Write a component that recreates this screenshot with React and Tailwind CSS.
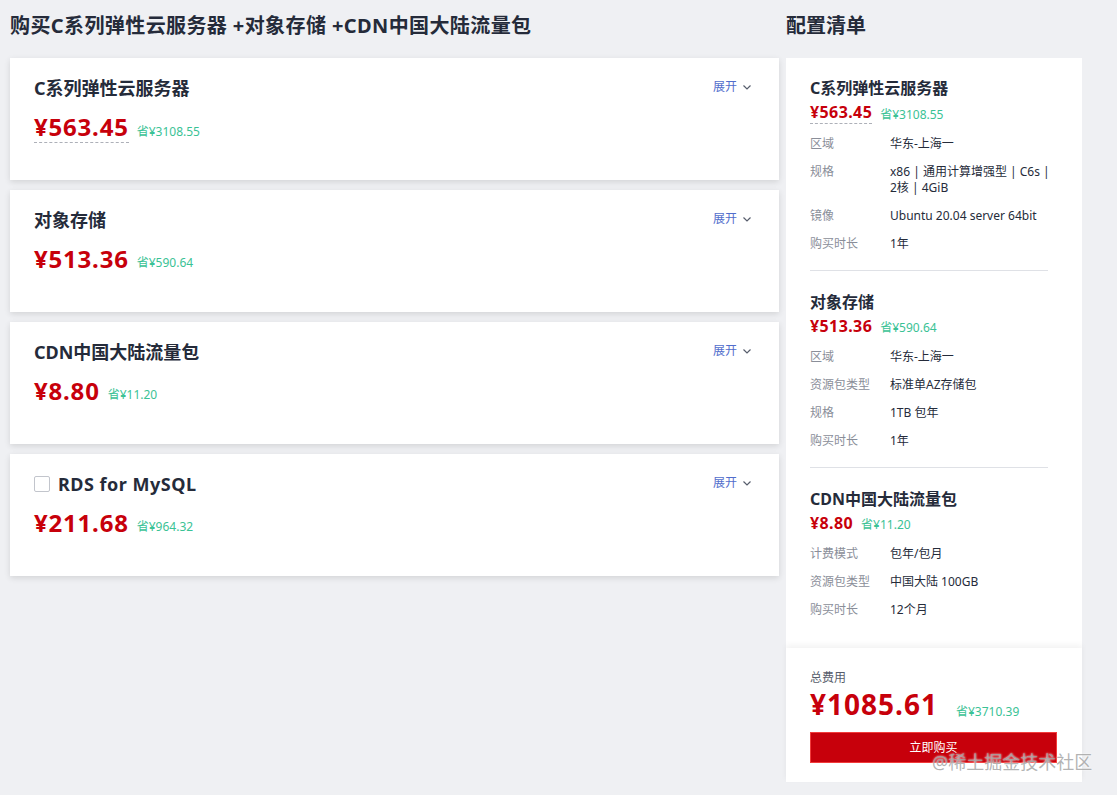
import React from "react";

const FONT = { fontFamily: '"Noto Sans", "Noto Sans CJK SC", sans-serif' };

function Chevron() {
  return (
    <svg width="10" height="10" viewBox="0 0 10 10" className="ml-[5px]">
      <path d="M1.5 3.5 L5 7 L8.5 3.5" fill="none" stroke="#575d6c" strokeWidth="1.2" />
    </svg>
  );
}

function ProductCard({ title, price, save, dashed, checkbox }) {
  return (
    <div className="h-[122px] bg-white shadow-[0_2px_6px_rgba(0,0,0,0.12)] px-6 pt-[16px] relative">
      <div className="flex items-start justify-between">
        <div className="flex items-center h-[28px]">
          {checkbox && (
            <span className="w-4 h-4 border border-[#c2c5cc] rounded-[2px] mr-2 bg-white" />
          )}
          <span className={"text-[18px] font-bold text-[#252b3a] leading-[28px] " + (checkbox ? "tracking-[0.5px]" : "")}>{title}</span>
        </div>
        <div className="flex items-center mr-[3px] mt-[1px] text-[12px] text-[#526ecc] leading-[24px]">
          展开
          <Chevron />
        </div>
      </div>
      <div className="flex items-end mt-[10px]">
        <span
          className={
            "text-[24px] font-bold text-[#c7000b] leading-[30px] tracking-[0.8px] " +
            (dashed ? "border-b border-dashed border-[#adb0b8]" : "")
          }
        >
          {price}
        </span>
        <span className="ml-[8px] mb-[3px] text-[12px] text-[#3ac295] leading-[16px]">{save}</span>
      </div>
    </div>
  );
}

function Row({ label, value }) {
  return (
    <div className="flex mt-3 text-[12px] leading-[16px]">
      <div className="w-[80px] shrink-0 text-[#8a8e99]">{label}</div>
      <div className="w-[164px] shrink-0 text-[#252b3a]">{value}</div>
    </div>
  );
}

function Section({ title, price, save, rows, dashed, divider }) {
  return (
    <div className={divider ? "pb-[18px] border-b border-[#dfe1e6]" : ""}>
      <div className="text-[16px] font-bold text-[#252b3a] leading-[24px]">{title}</div>
      <div className="flex items-end mt-[1px]">
        <span
          className={
            "text-[16px] font-bold text-[#c7000b] leading-[22px] tracking-[0.4px] " +
            (dashed ? "border-b border-dashed border-[#adb0b8]" : "")
          }
        >
          {price}
        </span>
        <span className="ml-2 text-[12px] text-[#3ac295] leading-[18px]">{save}</span>
      </div>
      {rows.map((r) => (
        <Row key={r[0]} label={r[0]} value={r[1]} />
      ))}
    </div>
  );
}

export default function App() {
  return (
    <div style={FONT} className="w-[1117px] h-[795px] bg-[#eff0f3] relative overflow-hidden">
      <div className="flex pl-[10px] pt-[12px]">
        <div className="w-[769px]">
          <h1 className="text-[20px] font-bold text-[#252b3a] leading-[28px] tracking-[0.4px]">
            购买C系列弹性云服务器 +对象存储 +CDN中国大陆流量包
          </h1>
          <div className="mt-[18px] flex flex-col gap-[10px]">
            <ProductCard title="C系列弹性云服务器" price="¥563.45" save="省¥3108.55" dashed />
            <ProductCard title="对象存储" price="¥513.36" save="省¥590.64" />
            <ProductCard title="CDN中国大陆流量包" price="¥8.80" save="省¥11.20" />
            <ProductCard title="RDS for MySQL" price="¥211.68" save="省¥964.32" checkbox />
          </div>
        </div>
        <div className="w-[296px] ml-[7px]">
          <h2 className="text-[20px] font-bold text-[#252b3a] leading-[28px]">配置清单</h2>
          <div className="mt-[18px] bg-white">
            <div className="pl-6 pr-[34px] pt-[18px] pb-[30px] flex flex-col gap-[19px]">
              <Section
                title="C系列弹性云服务器"
                price="¥563.45"
                save="省¥3108.55"
                dashed
                divider
                rows={[
                  ["区域", "华东-上海一"],
                  ["规格", "x86 | 通用计算增强型 | C6s | 2核 | 4GiB"],
                  ["镜像", "Ubuntu 20.04 server 64bit"],
                  ["购买时长", "1年"],
                ]}
              />
              <Section
                title="对象存储"
                price="¥513.36"
                save="省¥590.64"
                divider
                rows={[
                  ["区域", "华东-上海一"],
                  ["资源包类型", "标准单AZ存储包"],
                  ["规格", "1TB 包年"],
                  ["购买时长", "1年"],
                ]}
              />
              <Section
                title="CDN中国大陆流量包"
                price="¥8.80"
                save="省¥11.20"
                rows={[
                  ["计费模式", "包年/包月"],
                  ["资源包类型", "中国大陆 100GB"],
                  ["购买时长", "12个月"],
                ]}
              />
            </div>
            <div className="shadow-[0_-3px_6px_rgba(0,0,0,0.05)] pl-6 pr-[25px] pt-[22px] pb-[19px]">
              <div className="text-[12px] text-[#575d6c] leading-[16px]">总费用</div>
              <div className="flex items-end mt-0">
                <span className="text-[28px] font-bold text-[#c7000b] leading-[36px] tracking-[1px]">¥1085.61</span>
                <span className="ml-[18px] mb-[2px] text-[12px] text-[#3ac295] leading-[16px]">省¥3710.39</span>
              </div>
              <button className="mt-[10px] w-full h-[31px] bg-[#c7000b] border border-[#f23b3b] text-white text-[12px] leading-[16px]">
                立即购买
              </button>
            </div>
          </div>
        </div>
      </div>
      <div className="absolute left-[932px] top-[749px] text-[18px] leading-[26px] text-[#9a9a9a]/75 [text-shadow:0_0_2px_#fff]">
        @稀土掘金技术社区
      </div>
    </div>
  );
}
